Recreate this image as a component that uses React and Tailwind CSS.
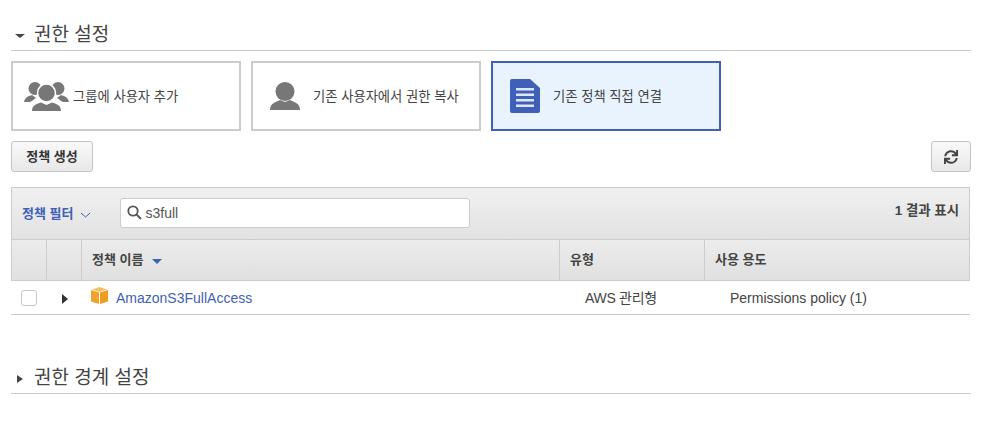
import React from "react";
import { FaSync } from "react-icons/fa";

const FONT = "font-['Liberation_Sans','Noto_Sans_CJK_KR',sans-serif]";

const GroupIcon = () => (
  <svg width="45" height="30" viewBox="0 0 45 30" fill="#777">
    <circle cx="11" cy="7.5" r="6.5" />
    <circle cx="34" cy="7.5" r="6.5" />
    <path d="M0 21 C1 16 5 15 8 14 L12 17 C9 19 8 20 6 21 Z" />
    <path d="M45 21 C44 16 40 15 37 14 L33 17 C36 19 37 20 39 21 Z" />
    <circle cx="22.5" cy="12" r="9" fill="#777" stroke="#fff" strokeWidth="1.5" />
    <path d="M8 30 C8 24 13 23 17 21.5 L22.5 24 L28 21.5 C32 23 37 24 37 30 Z" fill="#777" />
  </svg>
);

const UserIcon = () => (
  <svg width="30" height="28" viewBox="0 0 30 28" fill="#777">
    <circle cx="15" cy="9.5" r="9.5" />
    <path d="M0 28 C0 21 6 20 10 18 L15 20 L20 18 C24 20 30 21 30 28 Z" />
  </svg>
);

const DocIcon = () => (
  <svg width="30" height="34" viewBox="0 0 30 34">
    <path d="M2 0 H20 L30 9 V32 A2 2 0 0 1 28 34 H2 A2 2 0 0 1 0 32 V2 A2 2 0 0 1 2 0 Z" fill="#3f5fb8" />
    <rect x="6" y="9" width="18" height="2.5" fill="#dfe6f7" />
    <rect x="6" y="14.5" width="18" height="2.5" fill="#dfe6f7" />
    <rect x="6" y="20" width="18" height="2.5" fill="#dfe6f7" />
    <rect x="6" y="25.5" width="18" height="2.5" fill="#dfe6f7" />
  </svg>
);

const BoxIcon = () => (
  <svg width="17" height="17" viewBox="0 0 17 17">
    <path d="M8.5 0 L16 2.5 L8.5 5 L1 2.5 Z" fill="#f6c063" />
    <path d="M0 3 L8 5.6 V17 L0 14.5 Z" fill="#f0a32c" />
    <path d="M17 3 L9 5.6 V17 L17 14.5 Z" fill="#ee9c22" />
  </svg>
);

const Section = ({ open, title }) => (
  <div className="flex h-[27px] items-center border-b border-[#cccccc] pb-[6px]">
    {open ? (
      <span className="ml-[4px] mt-1 h-0 w-0 border-x-[5px] border-t-[4px] border-x-transparent border-t-[#444]" />
    ) : (
      <span className="ml-[6px] mt-1 h-0 w-0 border-y-[4px] border-l-[6px] border-y-transparent border-l-[#444]" />
    )}
    <span className={`text-[19px] leading-none text-[#444] ${open ? "ml-[9px]" : "ml-[11px]"}`}>{title}</span>
  </div>
);

const Card = ({ active, icon, iconWidth, label }) => (
  <div
    className={`flex h-[70px] w-[230px] items-center border-2 ${
      active ? "border-[#3f5fb8] bg-[#e9f3fe]" : "border-[#cccccc] bg-white"
    }`}
  >
    <div className={`flex justify-center ${iconWidth}`}>{icon}</div>
    <span className="mt-[1px] text-[13.3px] text-[#444]">{label}</span>
  </div>
);

const HeadCell = ({ className, children }) => (
  <div className={`flex h-full items-center border-r border-[#cccccc] text-[13px] font-bold text-[#444] ${className}`}>
    {children}
  </div>
);

export default function App() {
  return (
    <div className={`h-[429px] w-[991px] overflow-hidden bg-white px-[11px] pt-[24px] ${FONT}`}>
      <div className="w-[960px]">
        <Section open title="권한 설정" />

        <div className="mt-[10px] flex gap-[10px]">
          <Card icon={<GroupIcon />} iconWidth="w-[60px] pl-[7px]" label="그룹에 사용자 추가" />
          <Card icon={<UserIcon />} iconWidth="w-[60px] pl-[4px]" label="기존 사용자에서 권한 복사" />
          <Card active icon={<DocIcon />} iconWidth="w-[60px] pl-[4px]" label="기존 정책 직접 연결" />
        </div>

        <div className="mt-[10px] flex justify-between">
          <button className="h-[31px] w-[82px] rounded-[3px] border border-[#c4c4c4] bg-gradient-to-b from-[#f9f9f9] to-[#e8e8e8] text-[13px] font-bold text-[#333]">
            정책 생성
          </button>
          <button className="flex h-[31px] w-[40px] items-center justify-center rounded-[3px] border border-[#c4c4c4] bg-gradient-to-b from-[#f9f9f9] to-[#e8e8e8]">
            <FaSync size={14} className="text-[#444]" />
          </button>
        </div>

        <div className="mt-[15px] w-[959px]">
          <div className="flex h-[53px] items-center border border-[#cccccc] bg-gradient-to-b from-[#f0f0f0] to-[#e2e2e2] pl-[10px] pr-[10px]">
            <span className="text-[13px] font-bold text-[#3f5fb8]">정책 필터</span>
            <svg width="11" height="6" viewBox="0 0 11 6" className="ml-[7px] mt-[2px]" fill="none" stroke="#3f5fb8">
              <path d="M1 1 L5.5 5 L10 1" />
            </svg>
            <div className="mb-[2px] ml-[29px] flex h-[30px] w-[350px] items-center rounded-[3px] border border-[#cccccc] bg-white pl-[6px]">
              <svg width="15" height="15" viewBox="0 0 15 15" fill="none" stroke="#555" strokeWidth="1.8">
                <circle cx="6" cy="6" r="4.7" />
                <path d="M9.5 9.5 L14 14" />
              </svg>
              <span className="ml-[3px] text-sm text-[#555]">s3full</span>
            </div>
            <span className="ml-auto mb-[5px] text-[13.4px] font-bold text-[#444]">1 결과 표시</span>
          </div>

          <div className="flex h-[41px] border-x border-b border-[#cccccc] bg-gradient-to-b from-[#ececec] to-[#e0e0e0]">
            <HeadCell className="w-[35px]" />
            <HeadCell className="w-[35px]" />
            <HeadCell className="w-[478px] pl-[10px]">
              정책 이름
              <span className="ml-[9px] mt-[2px] h-0 w-0 border-x-[5px] border-t-[5px] border-x-transparent border-t-[#3f5fb8]" />
            </HeadCell>
            <HeadCell className="w-[145px] pl-[10px]">유형</HeadCell>
            <div className="flex h-full items-center pl-[10px] text-[13px] font-bold text-[#444]">사용 용도</div>
          </div>

          <div className="flex h-[34px] items-center border-b border-[#cccccc] text-sm text-[#444]">
            <div className="flex w-[36px] justify-center">
              <span className="ml-[-1px] h-4 w-4 rounded-[3px] border border-[#c8c8c8] bg-white" />
            </div>
            <div className="flex w-[35px] justify-center">
              <span className="mt-[2px] h-0 w-0 border-y-[5px] border-l-[6px] border-y-transparent border-l-[#333]" />
            </div>
            <div className="flex w-[478px] items-center pl-[9px]">
              <span className="mt-[-5px]"><BoxIcon /></span>
              <span className="ml-[8px] text-[#3f5fb8]">AmazonS3FullAccess</span>
            </div>
            <div className="w-[145px] pl-[25px] tracking-[-0.3px]">AWS 관리형</div>
            <div className="pl-[25px]">Permissions policy (1)</div>
          </div>
        </div>

        <div className="mt-[52px]">
          <Section title="권한 경계 설정" />
        </div>
      </div>
    </div>
  );
}
